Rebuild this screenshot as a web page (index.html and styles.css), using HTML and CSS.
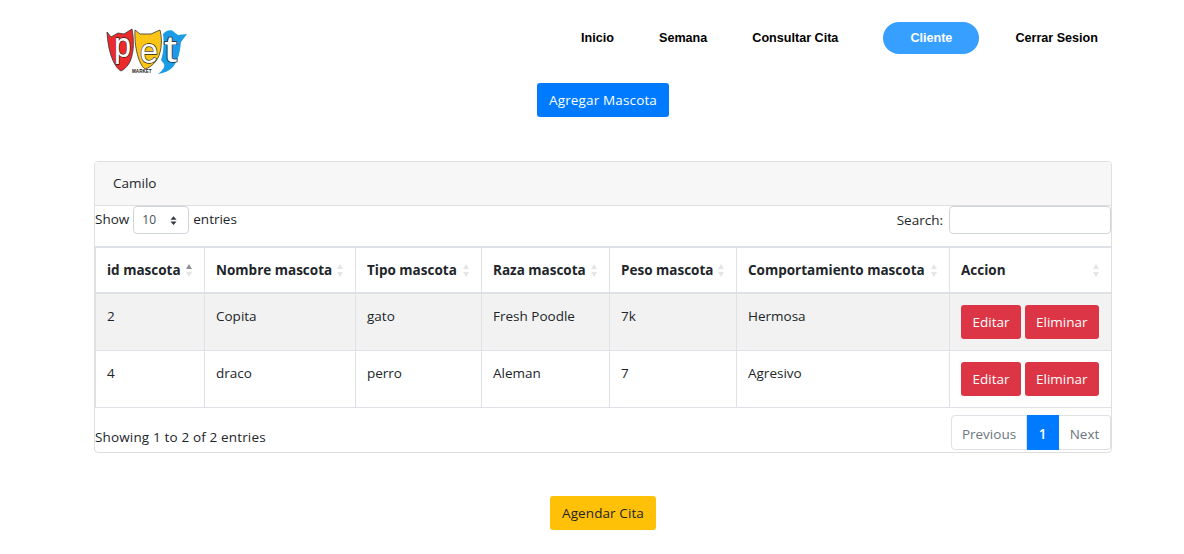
FILE: index.html
```html
<!DOCTYPE html>
<html lang="es">
<head>
<meta charset="utf-8">
<title>Mascotas</title>
<link rel="stylesheet" href="styles.css">
</head>
<body>
<header class="topbar">
  <svg class="logo" viewBox="0 0 84 52" aria-label="Pet Market">
    <path d="M1 5 L5 10 L12 6 L18 7 L26 2 C28 12 28 24 25 32 C23 38 19 42 15 44 C8 40 2 25 1 5Z" fill="#ec2a2c" stroke="#333" stroke-width=".8"/>
    <path d="M29 3 L34 7 L45 7 L54 3 C57 14 55 28 50 34 C47 38 43 41 39 42 C33 38 28 20 29 3Z" fill="#fcc417" stroke="#333" stroke-width=".8"/>
    <path d="M57 7 C60 3 66 2 68 5 L72 8 L81 7 L75 15 C74 24 73 32 67 40 C63 44 58 46 52 47 C57 43 59 40 58 37 L55 33 C58 25 58 15 57 7Z" fill="#1a9ce6"/>
    <text class="logo-l" transform="translate(8 30) scale(.85 1)">p</text>
    <text class="logo-l" transform="translate(34 36) scale(.9 1)">e</text>
    <text class="logo-l" transform="translate(58 35) scale(1.3 1)">t</text>
    <text class="logo-m" x="26" y="46">MARKET</text>
  </svg>
  <nav class="menu">
    <a class="menu-link" href="#">Inicio</a>
    <a class="menu-link" href="#">Semana</a>
    <a class="menu-link" href="#">Consultar Cita</a>
    <a class="menu-link active" href="#">Cliente</a>
    <a class="menu-link" href="#">Cerrar Sesion</a>
  </nav>
</header>

<main class="wrap">
  <div class="center top-action"><a class="btn btn-blue" href="#">Agregar Mascota</a></div>

  <section class="card">
    <div class="card-head">Camilo</div>
    <div class="controls">
      <label class="length">Show
        <span class="select">10
          <svg class="updown" viewBox="0 0 8 10"><path d="M4 0 L7.5 4 H.5Z M4 10 L.5 6 H7.5Z" fill="#343a40"/></svg>
        </span>
        entries</label>
      <label class="search">Search: <span class="search-box"></span></label>
    </div>
    <table class="grid">
      <colgroup>
        <col class="c1"><col class="c2"><col class="c3"><col class="c4"><col class="c5"><col class="c6"><col class="c7">
      </colgroup>
      <thead>
        <tr>
          <th><span class="th-in">id mascota<i class="sort asc"></i></span></th>
          <th><span class="th-in">Nombre mascota<i class="sort"></i></span></th>
          <th><span class="th-in">Tipo mascota<i class="sort"></i></span></th>
          <th><span class="th-in">Raza mascota<i class="sort"></i></span></th>
          <th><span class="th-in">Peso mascota<i class="sort"></i></span></th>
          <th><span class="th-in">Comportamiento mascota<i class="sort"></i></span></th>
          <th><span class="th-in">Accion<i class="sort"></i></span></th>
        </tr>
      </thead>
      <tbody>
        <tr class="odd">
          <td>2</td><td>Copita</td><td>gato</td><td>Fresh Poodle</td><td>7k</td><td>Hermosa</td>
          <td class="actions"><a class="btn btn-red" href="#">Editar</a><a class="btn btn-red" href="#">Eliminar</a></td>
        </tr>
        <tr>
          <td>4</td><td>draco</td><td>perro</td><td>Aleman</td><td>7</td><td>Agresivo</td>
          <td class="actions"><a class="btn btn-red" href="#">Editar</a><a class="btn btn-red" href="#">Eliminar</a></td>
        </tr>
      </tbody>
    </table>
    <div class="foot">
      <span class="info">Showing 1 to 2 of 2 entries</span>
      <div class="pager">
        <a class="page first" href="#">Previous</a>
        <a class="page current" href="#">1</a>
        <a class="page last" href="#">Next</a>
      </div>
    </div>
  </section>

  <div class="center bottom-action"><a class="btn btn-yellow" href="#">Agendar Cita</a></div>
</main>
</body>
</html>
```
FILE: styles.css
```css
* { box-sizing: border-box; }
html, body { margin: 0; height: 100%; }
body {
  background: #fff;
  color: #212529;
  font-family: "Open Sans", "Noto Sans", sans-serif;
  font-size: 13.5px;
  line-height: 20px;
  overflow: hidden;
}
a { text-decoration: none; }

.topbar {
  display: flex;
  justify-content: space-between;
  align-items: flex-start;
  height: 83px;
  padding: 22px 86px 0 106px;
}
.logo { width: 84px; height: 52px; margin-top: 5px; overflow: visible; }
.logo-l {
  font: 400 36px "Liberation Sans", sans-serif;
  fill: #fff;
  stroke: #222;
  stroke-width: 1.3px;
  paint-order: stroke;
  stroke-linejoin: round;
}
.logo-m { font: 700 4.6px "Liberation Sans", sans-serif; fill: #222; }

.menu { display: flex; align-items: center; gap: 45px; height: 32px; }
.menu-link {
  color: #000;
  font: 700 12.6px/32px "Liberation Sans", sans-serif;
}
.menu-link.active {
  width: 96px;
  margin-right: -9px;
  border-radius: 16px;
  background: #379fff;
  color: #fff;
  text-align: center;
}

.wrap { width: 1018px; margin-left: 94px; }
.center { display: flex; justify-content: center; }
.top-action { margin-bottom: 44px; }
.bottom-action { margin-top: 43px; }

.btn {
  display: inline-block;
  padding: 6px 12px;
  border: 1px solid transparent;
  border-radius: 3px;
  line-height: 20px;
  white-space: nowrap;
}
.btn-blue { padding: 6px 11px; background: #007bff; color: #fff; letter-spacing: .15px; }
.btn-red { background: #dc3545; color: #fff; }
.btn-yellow { padding: 6px 11px; background: #ffc107; color: #212529; letter-spacing: .1px; }

.card {
  height: 292px;
  border: 1px solid #dfdfdf;
  border-radius: 4px;
  overflow: hidden;
}
.card-head {
  height: 44px;
  padding: 11px 18px;
  background: #f7f7f7;
  border-bottom: 1px solid #dfdfdf;
}
.controls {
  display: flex;
  justify-content: space-between;
  align-items: flex-start;
  height: 40px;
}
.length { display: flex; align-items: flex-start; gap: 4px; height: 28px; padding-top: 3px; }
.select {
  display: flex;
  justify-content: space-between;
  align-items: center;
  width: 56px;
  height: 28px;
  margin-top: -3px;
  padding: 0 11px 0 8px;
  border: 1px solid #ced4da;
  border-radius: 4px;
  font-size: 12px;
  color: #495057;
}
.updown { width: 7px; height: 9px; }
.search { display: flex; align-items: center; gap: 6px; height: 28px; }
.search-box {
  display: block;
  width: 162px;
  height: 28px;
  border: 1px solid #ced4da;
  border-radius: 4px;
}

.grid {
  width: 1016px;
  border-collapse: collapse;
  table-layout: fixed;
  border: 1px solid #dee2e6;
  border-top-width: 2px;
}
.c1 { width: 109px; }
.c2 { width: 151px; }
.c3 { width: 126px; }
.c4 { width: 128px; }
.c5 { width: 127px; }
.c6 { width: 213px; }
.c7 { width: 162px; }
.grid th, .grid td {
  border: 1px solid #dee2e6;
  text-align: left;
  font-weight: 400;
}
.grid th {
  height: 46px;
  padding: 0 11px;
  border-bottom-width: 2px;
  font-weight: 700;
  white-space: nowrap;
  vertical-align: middle;
}
.grid td {
  height: 57px;
  padding: 12px 11px;
  vertical-align: top;
}
.odd td { background: #f2f2f2; }
.th-in { display: flex; justify-content: space-between; align-items: center; }

.sort {
  position: relative;
  display: block;
  flex: none;
  width: 7px;
  height: 13px;
  margin-left: 5px;
}
.sort::before, .sort::after {
  content: "";
  position: absolute;
  left: 0;
  border-left: 3.5px solid transparent;
  border-right: 3.5px solid transparent;
}
.sort::before { top: 0; border-bottom: 5px solid #e3e5e8; }
.sort::after { bottom: 0; border-top: 5px solid #e3e5e8; }
.sort.asc::before { border-bottom-color: #8d9196; }

.grid td.actions { padding: 11px 11px 0; white-space: nowrap; }
.actions .btn { padding: 6px 10px; text-align: center; }
.actions .btn:first-child { min-width: 60px; }
.actions .btn + .btn { margin-left: 4px; }

.foot {
  display: flex;
  justify-content: space-between;
  align-items: flex-start;
  padding-top: 7px;
}
.info { padding-top: 12px; letter-spacing: .15px; }
.pager { display: flex; height: 35px; }
.page {
  display: block;
  padding: 8px 0 6px;
  border: 1px solid #dee2e6;
  border-left-width: 0;
  line-height: 20px;
  text-align: center;
  color: #6c757d;
}
.page.first { width: 76px; border-left-width: 1px; border-radius: 4px 0 0 4px; }
.page.last { width: 52px; border-radius: 0 4px 4px 0; }
.page.current {
  width: 32px;
  background: #007bff;
  border-color: #007bff;
  color: #fff;
  font-weight: 600;
}
```
